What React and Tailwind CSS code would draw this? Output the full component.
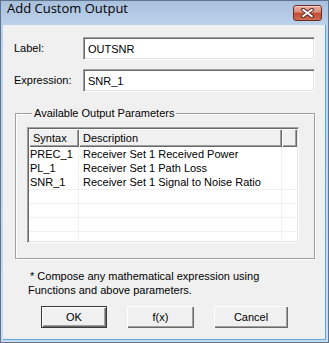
export default function App() {
  const rows = [
    ["PREC_1", "Receiver Set 1 Received Power"],
    ["PL_1", "Receiver Set 1 Path Loss"],
    ["SNR_1", "Receiver Set 1 Signal to Noise Ratio"],
  ];
  const inputCls =
    "h-[23px] w-[232px] bg-white border border-t-[#a0a0a0] border-l-[#a0a0a0] border-b-white border-r-white shadow-[inset_1px_1px_0_#696969,inset_-1px_-1px_0_#e3e3e3] pl-[4px] flex items-center leading-[14px]";
  const headCell =
    "h-[18px] shrink-0 bg-[#f0f0f0] shadow-[inset_1px_1px_0_#fff,inset_-1px_-1px_0_#696969,inset_-2px_-2px_0_#a0a0a0] flex items-center leading-[14px]";
  const btn =
    "h-[22px] flex items-center justify-center bg-[#f0f0f0] leading-[14px]";
  return (
    <div className="w-[329px] h-[343px] flex flex-col bg-[linear-gradient(to_bottom,#a9c0dc,#bcd2ec_24px,#c8dcf1)] border border-[#5e7590] text-[11px] text-black [font-family:Liberation_Sans,Arial,sans-serif]">
      {/* title bar */}
      <div className="h-[24px] shrink-0 flex items-start">
        <div className="pl-[6px] text-[13px] leading-[15px] [font-family:Open_Sans,Noto_Sans,sans-serif]">
          Add Custom Output
        </div>
        <div className="ml-auto mr-[6px] mt-[4px] w-[29px] h-[16px] rounded-[3px] border border-[#6e2b22] bg-[linear-gradient(to_bottom,#eab0a2,#d98a78_45%,#c54a34_50%,#cf6b55)] flex items-center justify-center shadow-[inset_0_1px_0_#f6d2c8]">
          <svg width="13" height="10" viewBox="0 0 13 10">
            <path d="M2 1.5 L11 8.5 M11 1.5 L2 8.5" stroke="#4a1e19" strokeWidth="3.6" strokeLinecap="square" fill="none" />
            <path d="M2.2 1.8 L10.8 8.2 M10.8 1.8 L2.2 8.2" stroke="#ffffff" strokeWidth="2" strokeLinecap="square" fill="none" />
          </svg>
        </div>
      </div>
      {/* content */}
      <div className="flex-1 ml-[2px] mr-[2px] mb-[2px] bg-[#f0f0f0] border-r border-b border-[#5aa5e8] flex flex-col">
        <div className="mt-[12px] flex items-center">
          <div className="w-[80px] pl-[11px]">Label:</div>
          <div className={inputCls}>OUTSNR</div>
        </div>
        <div className="mt-[9px] flex items-center">
          <div className="w-[80px] pl-[11px]">Expression:</div>
          <div className={inputCls}>SNR_1</div>
        </div>
        <fieldset className="mt-[15px] ml-[12px] w-[300px] border border-[#a0a0a0] shadow-[inset_1px_1px_0_#fff,1px_1px_0_#fff] pl-[11px] pb-[15px]">
          <legend className="ml-[5px] px-[2px] leading-[13px]">Available Output Parameters</legend>
          <div className="mt-[7px] w-[272px] h-[116px] border border-t-[#a0a0a0] border-l-[#a0a0a0] border-b-white border-r-white shadow-[inset_1px_1px_0_#696969,inset_-1px_-1px_0_#e3e3e3] p-[1px]">
            <div className="w-full h-full bg-white overflow-hidden flex flex-col">
              <div className="flex shrink-0">
                <div className={headCell + " w-[50px] pl-[4px]"}>Syntax</div>
                <div className={headCell + " w-[203px] pl-[4px]"}>Description</div>
                <div className={headCell + " flex-1"}></div>
              </div>
              {rows.map(([a, b]) => (
                <div key={a} className="flex h-[14px] shrink-0 leading-[14px]">
                  <div className="w-[50px] pl-[1px] border-r border-[#f0f0f0]">{a}</div>
                  <div className="w-[203px] pl-[4px] border-r border-[#f0f0f0]">{b}</div>
                  <div className="flex-1"></div>
                </div>
              ))}
              {[0, 1, 2, 3].map((i) => (
                <div key={i} className="flex h-[14px] shrink-0 border-t border-[#f0f0f0]">
                  <div className="w-[50px] border-r border-[#f0f0f0]"></div>
                  <div className="w-[203px] border-r border-[#f0f0f0]"></div>
                  <div className="flex-1"></div>
                </div>
              ))}
            </div>
          </div>
        </fieldset>
        <div className="mt-[10px] pl-[27px] leading-[14px]">
          <div>* Compose any mathematical expression using</div>
          <div className="ml-[-2px]">Functions and above parameters.</div>
        </div>
        <div className="mt-[9px] ml-[38px] flex gap-[20px]">
          <div className={btn + " w-[66px] border border-[#3a3a3a] shadow-[inset_1px_1px_0_#fff,inset_-1px_-1px_0_#696969,inset_-2px_-2px_0_#a0a0a0]"}>OK</div>
          <div className={btn + " w-[67px] shadow-[inset_1px_1px_0_#fff,inset_-1px_-1px_0_#696969,inset_-2px_-2px_0_#a0a0a0]"}>f(x)</div>
          <div className={btn + " w-[74px] shadow-[inset_1px_1px_0_#fff,inset_-1px_-1px_0_#696969,inset_-2px_-2px_0_#a0a0a0]"}>Cancel</div>
        </div>
      </div>
    </div>
  );
}
